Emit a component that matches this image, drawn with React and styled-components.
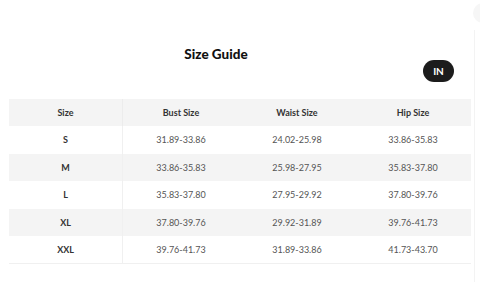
import styled, { createGlobalStyle } from "styled-components";

const rows = [
    { size: "S", bust: "31.89-33.86", waist: "24.02-25.98", hip: "33.86-35.83" },
    { size: "M", bust: "33.86-35.83", waist: "25.98-27.95", hip: "35.83-37.80" },
    { size: "L", bust: "35.83-37.80", waist: "27.95-29.92", hip: "37.80-39.76" },
    { size: "XL", bust: "37.80-39.76", waist: "29.92-31.89", hip: "39.76-41.73" },
    { size: "XXL", bust: "39.76-41.73", waist: "31.89-33.86", hip: "41.73-43.70" },
];

export default function App() {
    return (
        <>
            <GlobalStyle />
            <Page>
                <CloseButton />
                <ScrollTrack />
                <Header>
                    <Title>Size Guide</Title>
                    <UnitToggle>IN</UnitToggle>
                </Header>
                <Table>
                    <thead>
                        <Row $shaded>
                            <HeadCell $first>Size</HeadCell>
                            <HeadCell>Bust Size</HeadCell>
                            <HeadCell>Waist Size</HeadCell>
                            <HeadCell>Hip Size</HeadCell>
                        </Row>
                    </thead>
                    <tbody>
                        {rows.map((r, i) => (
                            <Row key={r.size} $shaded={i % 2 === 1}>
                                <SizeCell>{r.size}</SizeCell>
                                <Cell>{r.bust}</Cell>
                                <Cell>{r.waist}</Cell>
                                <Cell>{r.hip}</Cell>
                            </Row>
                        ))}
                    </tbody>
                </Table>
            </Page>
        </>
    );
}

const GlobalStyle = createGlobalStyle`
    body {
        margin: 0;
        background: #fff;
        font-family: Lato, "Noto Sans", sans-serif;
    }
`

const Page = styled.div`
    position: relative;
    width: 480px;
    height: 282px;
    padding-left: 9px;
    box-sizing: border-box;
    overflow: hidden;
`

const CloseButton = styled.div`
    position: absolute;
    top: 3px;
    left: 473px;
    width: 20px;
    height: 20px;
    border-radius: 50%;
    background: #f6f6f6;
`

const ScrollTrack = styled.div`
    position: absolute;
    top: 30px;
    bottom: 0;
    left: 474px;
    width: 1px;
    background: #f3f3f3;
`

const Header = styled.div`
    display: flex;
    align-items: flex-start;
    height: 98.5px;
    width: 461px;
`

const Title = styled.h2`
    flex: 1;
    margin: 44px 0 0;
    text-align: center;
    font-size: 13.5px;
    line-height: 20px;
    font-weight: 900;
    color: #111;
`

const UnitToggle = styled.button`
    margin: 60px 16px 0 0;
    width: 31px;
    height: 22px;
    padding: 0;
    border: none;
    border-radius: 11px;
    background: #1c1c1c;
    color: #fff;
    font-family: inherit;
    font-size: 10px;
    font-weight: 700;
`

const Table = styled.table`
    width: 461px;
    border-collapse: collapse;
    table-layout: fixed;
    border-bottom: 1px solid #f0f0f0;
`

const Row = styled.tr`
    height: 27.5px;
    background: ${p => (p.$shaded ? "#f4f4f4" : "#fff")};
`

const Cell = styled.td`
    padding: 0;
    text-align: center;
    font-size: 9px;
    color: #555;
`

const HeadCell = styled.th`
    padding: 0;
    width: ${p => (p.$first ? "113px" : "116px")};
    text-align: center;
    font-size: 9px;
    font-weight: 700;
    color: #333;
    border-right: ${p => (p.$first ? "1px solid #ececec" : "none")};
`

const SizeCell = styled(Cell)`
    font-weight: 700;
    color: #333;
    border-right: 1px solid #f0f0f0;
`
